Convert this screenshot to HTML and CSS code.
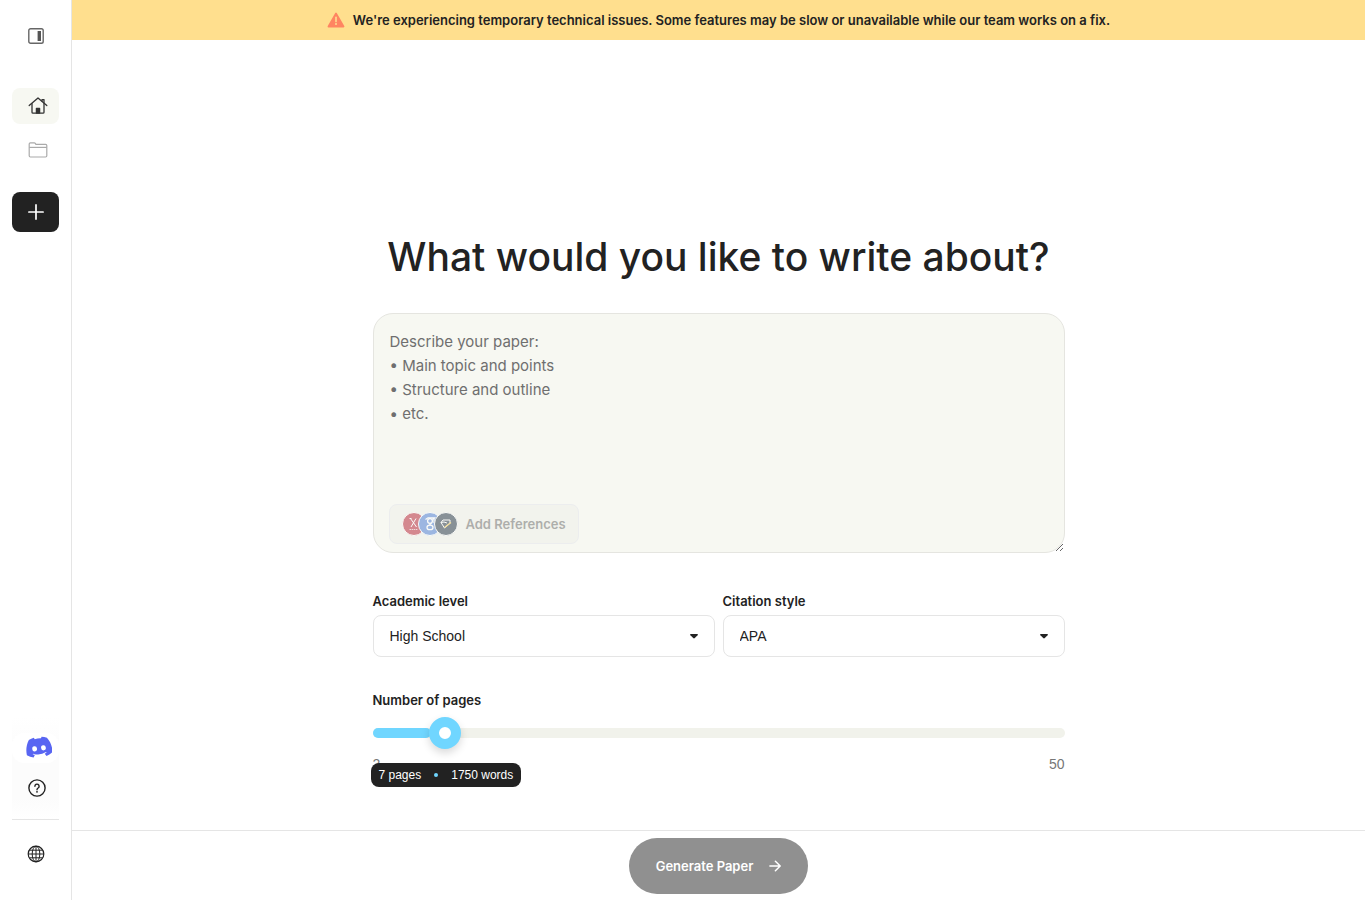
FILE: index.html
```html
<!DOCTYPE html>
<html lang="en">
<head>
  <meta charset="UTF-8">
  <meta name="viewport" content="width=device-width, initial-scale=1.0">
  <title>New paper</title>
  <link rel="stylesheet" href="styles.css">
</head>
<body>
  <!-- Sidebar -->
  <aside class="sidebar">
    <button type="button" class="toggle" aria-label="Expand sidebar">
      <svg width="16" height="16" viewBox="0 0 16 16" fill="none">
        <rect x="0.8" y="0.8" width="14.4" height="14.4" rx="1.8" stroke="#666" stroke-width="1.4"/>
        <rect x="9.6" y="3" width="3.4" height="10" fill="#555"/>
      </svg>
    </button>

    <nav class="side-nav">
      <a href="#" class="nav-item active" aria-label="Home">
        <svg width="20" height="20" viewBox="0 0 20 20" fill="none" stroke="#333" stroke-width="1.3" stroke-linejoin="round" stroke-linecap="round">
          <path d="M1.2 9.6 10 2l8.800 7.600"/>
          <path d="M4 7.600v8.600q0 1 1 1h10q1 0 1-1V7.600"/>
          <path d="M14 5V3.600h2v3.200"/>
          <path d="M8.400 17v-4.600h3.200V17z" fill="#333"/>
        </svg>
      </a>
      <a href="#" class="nav-item" aria-label="Documents">
        <svg width="20" height="20" viewBox="0 0 20 20" fill="none" stroke="#aaa" stroke-width="1.2" stroke-linejoin="round">
          <path d="M1.2 15.800V4q0-1.200 1.200-1.200h3.800q.7 0 1.100.6l.6.9h9.700q1.200 0 1.200 1.200v10.300q0 1.200-1.200 1.200H2.400q-1.200 0-1.200-1.200z"/>
          <path d="M1.200 7.400h17.600"/>
        </svg>
      </a>
    </nav>

    <button type="button" class="new-btn" aria-label="New paper">
      <svg width="16" height="16" viewBox="0 0 16 16" stroke="#fff" stroke-width="1.7" stroke-linecap="round">
        <path d="M8 .9v14.200M.9 8h14.200"/>
      </svg>
    </button>

    <div class="side-help">
      <a href="#" class="discord" aria-label="Discord">
        <svg width="26" height="24" viewBox="1 1 24 22">
          <g transform="rotate(-7 13 12)">
            <path fill="#5865f2" d="M21.4 3.6A19 19 0 0 0 16.6 2l-.7 1.4a18 18 0 0 0-5.8 0L9.400 2a19 19 0 0 0-4.800 1.600C1.500 8.200.7 12.700 1.100 17.200a19 19 0 0 0 5.900 3l1.400-2.300-1.900-1 .5-.4a13.600 13.600 0 0 0 12 0l.5.4-1.900 1 1.400 2.300a19 19 0 0 0 5.900-3c.5-5.200-.8-9.700-3.500-13.600z"/>
            <ellipse cx="8.900" cy="12.300" rx="2.200" ry="2.400" fill="#fff"/>
            <ellipse cx="17.100" cy="12.300" rx="2.200" ry="2.400" fill="#fff"/>
          </g>
        </svg>
      </a>
      <a href="#" class="help" aria-label="Help">
        <svg width="18" height="18" viewBox="0 0 18 18" fill="none" stroke="#222" stroke-width="1.4">
          <circle cx="9" cy="9" r="8.100"/>
          <path d="M6.900 7.200a2.100 2.100 0 1 1 3.200 1.800q-1.100.7-1.100 1.700" stroke-linecap="round"/>
          <circle cx="9" cy="12.800" r=".9" fill="#222" stroke="none"/>
        </svg>
      </a>
    </div>

    <button type="button" class="language" aria-label="Language">
      <svg width="18" height="18" viewBox="0 0 18 18" fill="none" stroke="#222" stroke-width="1">
        <circle cx="9" cy="9" r="7.800" stroke-width="1.200"/>
        <ellipse cx="9" cy="9" rx="3.800" ry="7.800"/>
        <path d="M9 1.200v15.600M1.200 9h15.600M2.400 5.200h13.200M2.400 12.800h13.200"/>
      </svg>
    </button>
  </aside>

  <div class="page">
    <div class="banner" role="status">
      <svg width="18" height="16" viewBox="0 0 18 16">
        <path d="M9 1.500 16.500 14.500h-15z" fill="#ff8562" stroke="#ff8562" stroke-width="1.800" stroke-linejoin="round"/>
        <path d="M9 5.400v4.200" stroke="#ffdf8e" stroke-width="1.600" stroke-linecap="round"/>
        <circle cx="9" cy="12" r="1" fill="#ffdf8e"/>
      </svg>
      <span>We're experiencing temporary technical issues. Some features may be slow or unavailable while our team works on a fix.</span>
    </div>

    <main class="content">
      <form class="paper-form" id="paperForm">
        <h1 class="title">What would you like to write about?</h1>

        <div class="prompt-box">
          <textarea class="prompt" aria-label="Describe your paper" placeholder="Describe your paper:
• Main topic and points
• Structure and outline
• etc."></textarea>
          <button type="button" class="references" disabled>
            <svg width="56" height="24" viewBox="0 0 56 24" fill="none">
              <circle cx="12" cy="12" r="11.500" fill="#b31b2e" stroke="#fff"/>
              <path d="M8.500 6.500 14.500 15M14 6.500 9 15M7.500 6.500h2" stroke="#fff"/>
              <path d="M7.500 17.500h8.500" stroke="#fff" stroke-dasharray="1.500 .6" opacity=".7"/>
              <circle cx="28" cy="12" r="11.500" fill="#4377d1" stroke="#fff"/>
              <path d="M23.500 7.500 26 5.800h6.500L30.500 7.500" stroke="#fff" stroke-width="1.200"/>
              <circle cx="28" cy="9" r="2.400" stroke="#fff" stroke-width="1.300"/>
              <ellipse cx="28" cy="15.400" rx="3" ry="2.200" stroke="#fff" stroke-width="1.300"/>
              <path d="M29.500 11l-2 2M32 6v5" stroke="#fff" stroke-width="1.200"/>
              <circle cx="44" cy="12" r="11.500" fill="#1b2d3f" stroke="#fff"/>
              <path d="M39 10.500 41 8h7v3l-5.500 5L39 10.500l3-.5 3 1" stroke="#fff"/>
              <path d="M42.500 15.500 49 10.500" stroke="#f2c94c" stroke-width="1.300"/>
            </svg>
            <span>Add References</span>
          </button>
        </div>

        <div class="fields">
          <div class="field">
            <label class="label" for="level">Academic level</label>
            <div class="select-box">
              <select id="level">
                <option>High School</option>
                <option>Undergraduate</option>
                <option>Graduate</option>
              </select>
              <svg width="8" height="5" viewBox="0 0 8 5"><path d="M.6 0h6.800q.8.500.2 1.200L4.800 4.100q-.8.700-1.600 0L.4 1.200Q-.2.500.6 0z" fill="#222"/></svg>
            </div>
          </div>
          <div class="field">
            <label class="label" for="citation">Citation style</label>
            <div class="select-box">
              <select id="citation">
                <option>APA</option>
                <option>MLA</option>
                <option>Chicago</option>
              </select>
              <svg width="8" height="5" viewBox="0 0 8 5"><path d="M.6 0h6.800q.8.500.2 1.200L4.800 4.100q-.8.700-1.600 0L.4 1.200Q-.2.500.6 0z" fill="#222"/></svg>
            </div>
          </div>
        </div>

        <div class="pages">
          <label class="label" for="pages">Number of pages</label>
          <div class="slider">
            <div class="track"><div class="fill" style="width: calc(10.4% - 13px)"></div></div>
            <input type="range" id="pages" min="2" max="50" value="7">
          </div>
          <div class="limits">
            <span>2</span>
            <span>50</span>
          </div>
          <output class="tooltip" for="pages">
            <span>7 pages</span>
            <i class="dot"></i>
            <span>1750 words</span>
          </output>
        </div>
      </form>
    </main>

    <footer class="footer">
      <button type="submit" form="paperForm" class="generate" disabled>
        Generate Paper
        <svg width="12" height="12" viewBox="0 0 12 12" fill="none" stroke="#fff" stroke-width="1.500" stroke-linecap="round" stroke-linejoin="round">
          <path d="M.9 6h10.200M6.400 1.200 11.200 6l-4.800 4.800"/>
        </svg>
      </button>
    </footer>
  </div>
</body>
</html>
```
FILE: styles.css
```css
* {
  box-sizing: border-box;
  margin: 0;
  padding: 0;
}

body {
  display: flex;
  min-height: 100vh;
  font-family: Inter, "Liberation Sans", sans-serif;
  font-size: 13px;
  line-height: 20px;
  color: #222;
  background: #fff;
}

button,
select,
textarea {
  font: inherit;
  color: inherit;
}

button {
  border: none;
  background: none;
  cursor: pointer;
}

svg {
  display: block;
  flex: none;
}

/* Sidebar */
.sidebar {
  display: flex;
  flex-direction: column;
  flex: none;
  width: 72px;
  padding: 16px 12px 24px;
  border-right: 1px solid #e5e5e5;
}

.toggle {
  display: flex;
  align-items: center;
  justify-content: center;
  height: 40px;
  margin-bottom: 32px;
}

.side-nav {
  display: flex;
  flex-direction: column;
  gap: 8px;
  margin-bottom: 24px;
}

.nav-item {
  display: flex;
  align-items: center;
  height: 36px;
  padding-left: 16px;
  border-radius: 8px;
}

.nav-item.active {
  background: #f7f8f2;
}

.new-btn {
  display: flex;
  align-items: center;
  justify-content: center;
  height: 40px;
  border-radius: 8px;
  background: #222;
}

.side-help {
  margin-top: auto;
  padding-top: 16px;
  border-bottom: 1px solid #e5e5e5;
  background: linear-gradient(#fff, #fcfcfc 30%, #fcfcfc 80%, #fff);
}

.discord {
  display: flex;
  align-items: center;
  height: 30px;
  padding-left: 14px;
  border-radius: 12px;
  background: #fff;
}

.help {
  display: flex;
  align-items: center;
  height: 50px;
  margin-bottom: 6px;
  padding-left: 16px;
}

.language {
  display: flex;
  align-items: center;
  justify-content: center;
  height: 44px;
  margin-top: 12px;
}

/* Page */
.page {
  display: flex;
  flex-direction: column;
  flex: 1;
  min-width: 0;
}

.banner {
  display: flex;
  align-items: center;
  justify-content: center;
  gap: 8px;
  min-height: 40px;
  padding: 0 16px;
  font-weight: 600;
  background: #ffdf8e;
}

.content {
  flex: 1;
  padding: 192px 16px 16px;
}

.paper-form {
  max-width: 692px;
  margin: 0 auto;
}

.title {
  margin-bottom: 32px;
  font-size: 39px;
  line-height: 49px;
  font-weight: 500;
  text-align: center;
}

.prompt-box {
  position: relative;
}

.prompt {
  display: block;
  width: 100%;
  height: 240px;
  padding: 16px;
  border: 1px solid #e5e5e0;
  border-radius: 20px;
  outline: none;
  font-size: 15px;
  line-height: 24px;
  background: #f7f8f2;
}

.prompt::placeholder {
  color: #6f6f6f;
}

.references {
  position: absolute;
  left: 16px;
  bottom: 9px;
  display: flex;
  align-items: center;
  gap: 8px;
  height: 40px;
  padding: 0 12px;
  border: 1px solid #e2e4ec;
  border-radius: 8px;
  font-weight: 600;
  color: #666;
  background: #eeefe9;
  opacity: 0.5;
}

/* Fields */
.fields {
  display: flex;
  gap: 8px;
  margin: 38px 0 33px;
}

.field {
  flex: 1;
}

.label {
  display: block;
  font-weight: 600;
}

.select-box {
  display: grid;
  align-items: center;
  margin-top: 4px;
}

.select-box select,
.select-box svg {
  grid-area: 1 / 1;
}

.select-box select {
  width: 100%;
  height: 42px;
  padding: 0 16px;
  border: 1px solid #e5e5e5;
  border-radius: 8px;
  font-family: "Liberation Sans", sans-serif;
  font-size: 14px;
  background: #fff;
  appearance: none;
}

.select-box svg {
  justify-self: end;
  margin-right: 17px;
  pointer-events: none;
}

/* Page slider */
.pages {
  position: relative;
}

.slider {
  display: grid;
  align-items: center;
  margin: 7px 0 5px;
}

.track,
.slider input {
  grid-area: 1 / 1;
}

.track {
  height: 10px;
  border-radius: 5px;
  background: #f1f2eb;
}

.fill {
  height: 10px;
  border-radius: 5px;
  background: #70d6ff;
}

/* wider than the track so the thumb centre reaches both ends */
.slider input {
  height: 32px;
  margin: 0 -16px;
  background: none;
  appearance: none;
  cursor: pointer;
}

.slider input::-webkit-slider-thumb {
  width: 32px;
  height: 32px;
  border: 10px solid #70d6ff;
  border-radius: 50%;
  background: #fff;
  box-shadow: 0 4px 8px rgba(0, 0, 0, 0.15);
  appearance: none;
}

.limits {
  display: flex;
  justify-content: space-between;
  font-family: "Liberation Sans", sans-serif;
  font-size: 14px;
  color: #777;
}

.tooltip {
  position: absolute;
  left: -2px;
  top: 73px;
  display: flex;
  align-items: center;
  gap: 13px;
  height: 24px;
  padding: 0 8px;
  border-radius: 8px;
  font-family: "Liberation Sans", sans-serif;
  font-size: 12px;
  white-space: nowrap;
  color: #fff;
  background: #222;
}

.dot {
  width: 4px;
  height: 4px;
  border-radius: 50%;
  background: #70d6ff;
}

/* Footer */
.footer {
  display: flex;
  justify-content: center;
  padding: 7px 16px 6px;
  border-top: 1px solid #e5e5e5;
}

.generate {
  display: flex;
  align-items: center;
  justify-content: center;
  gap: 16px;
  height: 56px;
  padding: 0 27px;
  border-radius: 28px;
  font-weight: 600;
  color: #fff;
  background: #909090;
}

@media (max-width: 600px) {
  .content {
    padding-top: 48px;
  }

  .fields {
    flex-direction: column;
  }
}
```
